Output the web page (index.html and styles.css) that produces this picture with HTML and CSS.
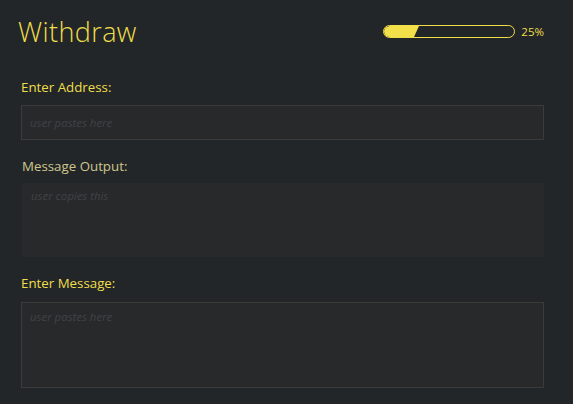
FILE: index.html
```html
<!DOCTYPE html>
<html>
<head>
<meta charset="utf-8">
<link rel="stylesheet" href="styles.css">
</head>
<body>
<div class="page">
  <header class="head">
    <h1 class="title">Withdraw</h1>
    <div class="progress">
      <div class="bar">
        <svg class="fill" width="132" height="13" viewBox="0 0 132 13">
          <path d="M6.5 1 H36 L31 12 H6.5 A5.5 5.5 0 0 1 6.5 1 Z" fill="#f2df4a"/>
        </svg>
      </div>
      <span class="pct">25%</span>
    </div>
  </header>

  <label class="label">Enter Address:</label>
  <div class="field input"><span class="ph">user pastes here</span></div>

  <label class="label dim">Message Output:</label>
  <div class="field output"><span class="ph">user copies this</span></div>

  <label class="label last">Enter Message:</label>
  <div class="field area"><span class="ph">user pastes here</span></div>
</div>
</body>
</html>
```

FILE: styles.css
```css
html, body {
  margin: 0;
  padding: 0;
  background: #222628;
}
body {
  font-family: "Open Sans", "DejaVu Sans", sans-serif;
  width: 573px;
  height: 404px;
  overflow: hidden;
}
.page {
  padding: 0 29px 0 21px;
}
.head {
  display: flex;
  align-items: center;
  justify-content: space-between;
  height: 62px;
  margin-left: -3px;
}
.title {
  margin: 0;
  font-weight: 300;
  font-size: 27px;
  color: #f0dd4a;
  letter-spacing: 0.4px;
}
.progress {
  display: flex;
  align-items: center;
  gap: 6px;
}
.bar {
  position: relative;
  width: 130px;
  height: 11px;
  border: 1px solid #f0dd4a;
  border-radius: 7px;
  overflow: hidden;
}
.fill {
  position: absolute;
  left: -1px;
  top: -1px;
}
.pct {
  font-size: 11.5px;
  color: #f0dd4a;
}
.label {
  display: block;
  font-size: 13.3px;
  color: #f0dd4a;
  margin-top: 16px;
  line-height: 18px;
  height: 27px;
}
.label.dim {
  color: #cfc68f;
  margin-left: 1px;
  margin-top: 17px;
  height: 26px;
}
.label.last {
  margin-top: 17px;
  height: 28px;
}
.field {
  box-sizing: border-box;
  background: #28292b;
  border: 1px solid #3a3c3b;
  padding: 0 8px;
}
.ph {
  font-style: italic;
  font-size: 11.4px;
  color: #404345;
}
.input {
  height: 35px;
  display: flex;
  align-items: center;
}
.output {
  border: none;
  margin-left: 1px;
  height: 74px;
  padding: 0 9px;
}
.area {
  height: 86px;
  padding: 1px 8px;
}
```
